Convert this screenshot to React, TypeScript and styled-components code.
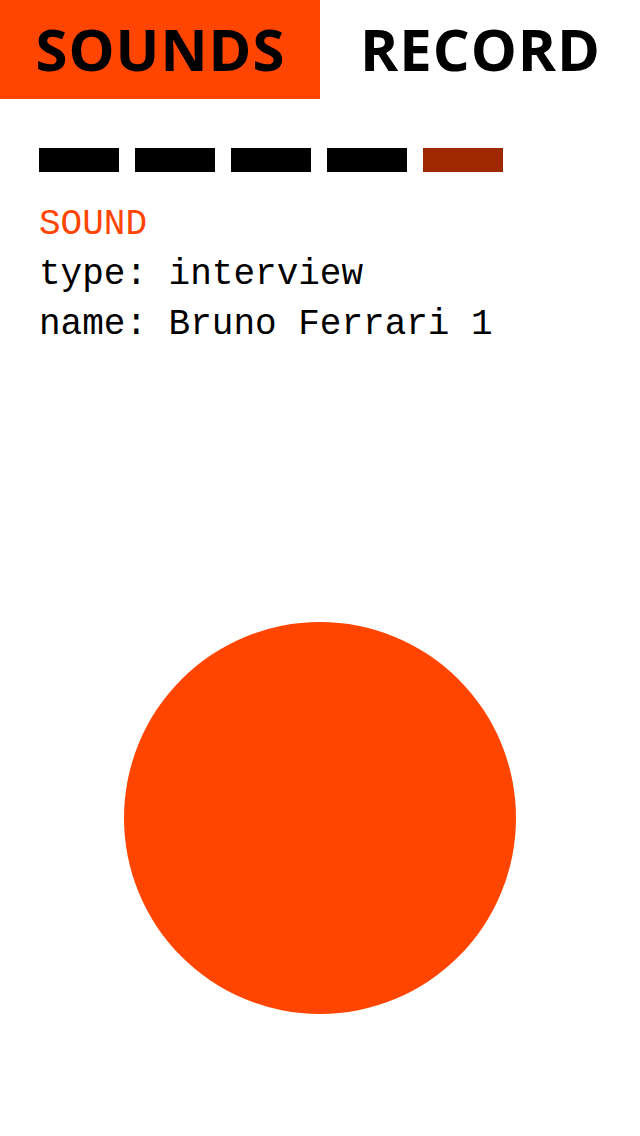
import React from "react";
import styled, { createGlobalStyle } from "styled-components";

const GlobalStyle = createGlobalStyle`
  html, body { margin: 0; padding: 0; background: #ffffff; }
  body { width: 640px; height: 1136px; overflow: hidden; }
`;

const Page = styled.div`
  width: 640px;
  height: 1136px;
  display: flex;
  flex-direction: column;
  background: #ffffff;
`;

const TabBar = styled.nav`
  display: grid;
  grid-template-columns: 320px 320px;
  height: 99px;
`;

const Tab = styled.div<{ $active?: boolean }>`
  display: flex;
  align-items: center;
  justify-content: center;
  background: ${(p) => (p.$active ? "#ff4500" : "#ffffff")};
  color: #000000;
  font-family: "Open Sans", "DejaVu Sans", sans-serif;
  font-weight: 700;
  font-size: 58px;
  letter-spacing: 1px;
  padding: 0 0 2px 1px;
`;

const Content = styled.section`
  padding: 49px 0 0 39px;
  display: flex;
  flex-direction: column;
`;

const Steps = styled.div`
  display: flex;
  gap: 16px;
`;

const Step = styled.div<{ $current?: boolean }>`
  width: 80px;
  height: 24px;
  background: ${(p) => (p.$current ? "#a02800" : "#000000")};
`;

const Info = styled.div`
  margin-top: 28px;
  font-family: "Liberation Mono", "Courier New", monospace;
  font-size: 36px;
  line-height: 50px;
  color: #000000;
`;

const Line = styled.div<{ $accent?: boolean }>`
  color: ${(p) => (p.$accent ? "#ff4500" : "#000000")};
  white-space: pre;
`;

const Stage = styled.div`
  flex: 1;
  display: flex;
  justify-content: center;
  padding-top: 272px;
`;

const RecordButton = styled.button`
  width: 392px;
  height: 392px;
  border-radius: 50%;
  border: none;
  background: #ff4500;
  padding: 0;
  cursor: pointer;
`;

export default function App() {
  return (
    <>
      <GlobalStyle />
      <Page>
        <TabBar>
          <Tab $active>SOUNDS</Tab>
          <Tab>RECORD</Tab>
        </TabBar>
        <Content>
          <Steps>
            <Step />
            <Step />
            <Step />
            <Step />
            <Step $current />
          </Steps>
          <Info>
            <Line $accent>SOUND</Line>
            <Line>type: interview</Line>
            <Line>name: Bruno Ferrari 1</Line>
          </Info>
        </Content>
        <Stage>
          <RecordButton aria-label="record" />
        </Stage>
      </Page>
    </>
  );
}
